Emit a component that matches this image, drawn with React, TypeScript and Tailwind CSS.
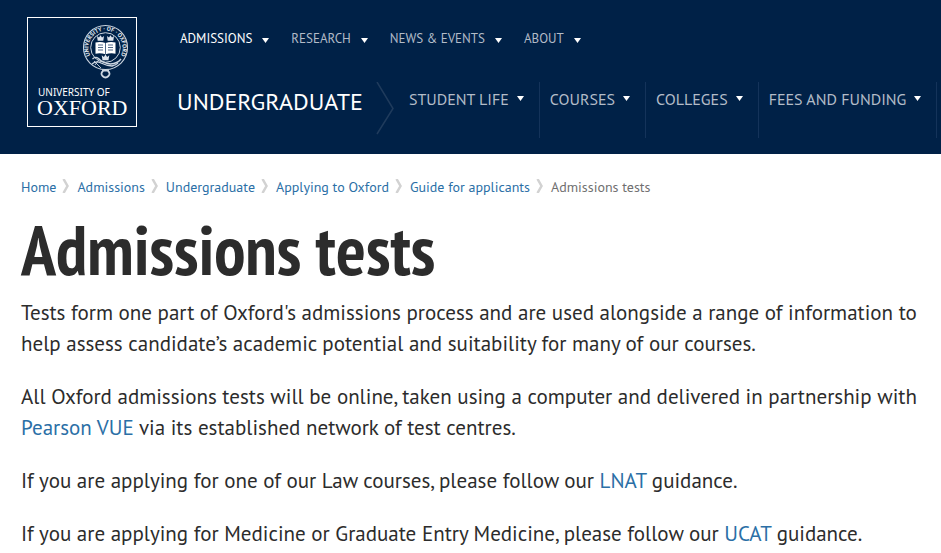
import React from 'react';
import { twMerge } from 'tailwind-merge';

interface NavItem {
  label: string;
  active?: boolean;
}

const mainNav: NavItem[] = [
  { label: 'ADMISSIONS', active: true },
  { label: 'RESEARCH' },
  { label: 'NEWS & EVENTS' },
  { label: 'ABOUT' },
];

const sectionNav: NavItem[] = [
  { label: 'STUDENT LIFE' },
  { label: 'COURSES' },
  { label: 'COLLEGES' },
  { label: 'FEES AND FUNDING' },
];

const breadcrumbs = ['Home', 'Admissions', 'Undergraduate', 'Applying to Oxford', 'Guide for applicants'];

const Caret: React.FC = () => (
  <svg width="7" height="5" viewBox="0 0 7 5" fill="#fff" aria-hidden="true">
    <path d="M0 0h7L3.5 5z" />
  </svg>
);

const Logo: React.FC = () => (
  <a href="#home" aria-label="University of Oxford" className="block shrink-0">
    <svg width="110" height="110" viewBox="0 0 110 110">
      <rect x="0.5" y="0.5" width="109" height="109" fill="none" stroke="#fff" />
      {/* Belt */}
      <g fill="none" stroke="#c9d3de">
        <circle cx="78.5" cy="30.5" r="22" strokeWidth="1.1" />
        <circle cx="78.5" cy="30.5" r="14.8" strokeWidth="1" />
      </g>
      <path id="belt" d="M65.4 41.8A17.1 17.1 0 1 1 91.6 41.8" fill="none" />
      <text fill="#e3e9f0" fontSize="6" fontWeight="700" fontFamily="'PT Sans', 'Noto Sans', sans-serif">
        <textPath href="#belt" startOffset="50%" textAnchor="middle">
          UNIVERSITY · OF · OXFORD
        </textPath>
      </text>
      {/* Crowns */}
      <g fill="#dce3ec">
        <path d="M70 19l2 1.6 1.5-2.4 1.5 2.4 2-1.6-.7 4.7h-5.6z" />
        <path d="M80 19l2 1.6 1.5-2.4 1.5 2.4 2-1.6-.7 4.7h-5.6z" />
        <path d="M74.7 38.3l2.2 1.6 1.6-2.6 1.6 2.6 2.2-1.6-.8 5h-6z" />
      </g>
      {/* Open book */}
      <path d="M68.5 25.5q5-1.2 10 .4 5-1.6 10-.4v11.2q-5-.9-10 .6-5-1.5-10-.6z" fill="#fff" />
      <path
        d="M78.5 26v11M71 28h5M71 30.5h5M71 33h5M81 28h5M81 30.5h5M81 33h5"
        stroke="#3c587b"
        strokeWidth="0.9"
      />
      {/* Buckle and strap end */}
      <g fill="none" stroke="#cdd6e1">
        <path d="M65.5 42q3-3 6-.5 4 4.5 12 5.5 7-.5 10.5-5" strokeWidth="1.4" />
        <path d="M65 47q4-3.5 9-1t11 3q4-1 6-3" strokeWidth="1.3" />
        <path d="M67 44l7 7M72 42.5l-4 5.5" strokeWidth="0.9" />
        <path d="M75 53.5h7M76 54q-2.8 2.5-.5 5 3 3 6 0 2.3-2.5-.5-5" strokeWidth="1.8" />
      </g>
      <text x="11" y="79" fill="#fff" fontSize="10" fontFamily="'Noto Sans', sans-serif">
        UNIVERSITY OF
      </text>
      <text x="10" y="98" fill="#fff" fontSize="22" fontFamily="'Liberation Serif', serif">
        OXFORD
      </text>
    </svg>
  </a>
);

const Header: React.FC = () => (
  <header className="flex gap-10 bg-[#002147] pt-[17px] pl-[27px] pb-4 overflow-hidden">
    <Logo />
    <div className="min-w-0">
      <nav aria-label="Main" className="flex gap-[22px] pt-3 pl-[3px] text-[13px] leading-5">
        {mainNav.map(item => (
          <a
            key={item.label}
            href="#nav"
            className={twMerge('flex items-center gap-[10px] whitespace-nowrap text-[#b3bcc8]', item.active && 'text-white')}
          >
            {item.label}
            <span className="pt-[3px]">
              <Caret />
            </span>
          </a>
        ))}
      </nav>
      <div className="flex pt-[33px]">
        <a href="#undergraduate" className="pt-1 text-[24px] leading-8 text-white">
          UNDERGRADUATE
        </a>
        <svg
          width="18"
          height="53"
          viewBox="0 0 18 53"
          className="ml-[13px] shrink-0"
          fill="none"
          stroke="#1f3b5c"
          strokeWidth="1.5"
          aria-hidden="true"
        >
          <path d="M1 0l16 26.5L1 52" />
        </svg>
        <nav aria-label="Undergraduate" className="flex pl-[5px]">
          {sectionNav.map(item => (
            <a
              key={item.label}
              href="#nav"
              className="flex h-14 items-start gap-2 whitespace-nowrap border-r border-[#14335a] pt-[7px] pl-[10px] pr-[15px] text-[16px] leading-5 text-[#b3bcc8]"
            >
              {item.label}
              <span className="flex h-[18px] items-center">
                <Caret />
              </span>
            </a>
          ))}
        </nav>
      </div>
    </div>
  </header>
);

const Breadcrumbs: React.FC = () => (
  <nav aria-label="Breadcrumb" className="pt-[23px]">
    <ol className="flex flex-wrap text-[14px] leading-5">
      {breadcrumbs.map(crumb => (
        <li key={crumb} className="flex">
          <a href="#crumb" className="text-[#2b6fa6]">
            {crumb}
          </a>
          <svg
            width="8"
            height="14"
            viewBox="0 0 8 14"
            className="ml-[6px] mr-[7px] mt-[2px]"
            fill="none"
            stroke="#d2d2d2"
            strokeWidth="2.5"
            aria-hidden="true"
          >
            <path d="M1.5 0l4 7-4 7" />
          </svg>
        </li>
      ))}
      <li className="text-[#6f6f6f]" aria-current="page">
        Admissions tests
      </li>
    </ol>
  </nav>
);

const TextLink: React.FC<{ children: React.ReactNode }> = ({ children }) => (
  <a href="#guidance" className="text-[#2b6fa6]">
    {children}
  </a>
);

export default function App() {
  return (
    <div className="bg-white font-['PT_Sans','Noto_Sans',sans-serif] text-[#2c2c2c]">
      <Header />
      <main className="px-[21px]">
        <Breadcrumbs />
        <h1 className="pt-3 font-['PT_Sans_Narrow','Liberation_Sans_Narrow','Noto_Sans',sans-serif] text-[70px] leading-[80px] font-bold">
          Admissions tests
        </h1>
        <div className="flex flex-col gap-[22px] pt-2 text-[21px] leading-[31px]">
          <p>
            Tests form one part of Oxford's admissions process and are used alongside a range of information to help assess candidate’s
            academic potential and suitability for many of our courses.
          </p>
          <p>
            All Oxford admissions tests will be online, taken using a computer and delivered in partnership with{' '}
            <TextLink>Pearson VUE</TextLink> via its established network of test centres.
          </p>
          <p>
            If you are applying for one of our Law courses, please follow our <TextLink>LNAT</TextLink> guidance.
          </p>
          <p>
            If you are applying for Medicine or Graduate Entry Medicine, please follow our <TextLink>UCAT</TextLink> guidance.
          </p>
        </div>
      </main>
    </div>
  );
}
